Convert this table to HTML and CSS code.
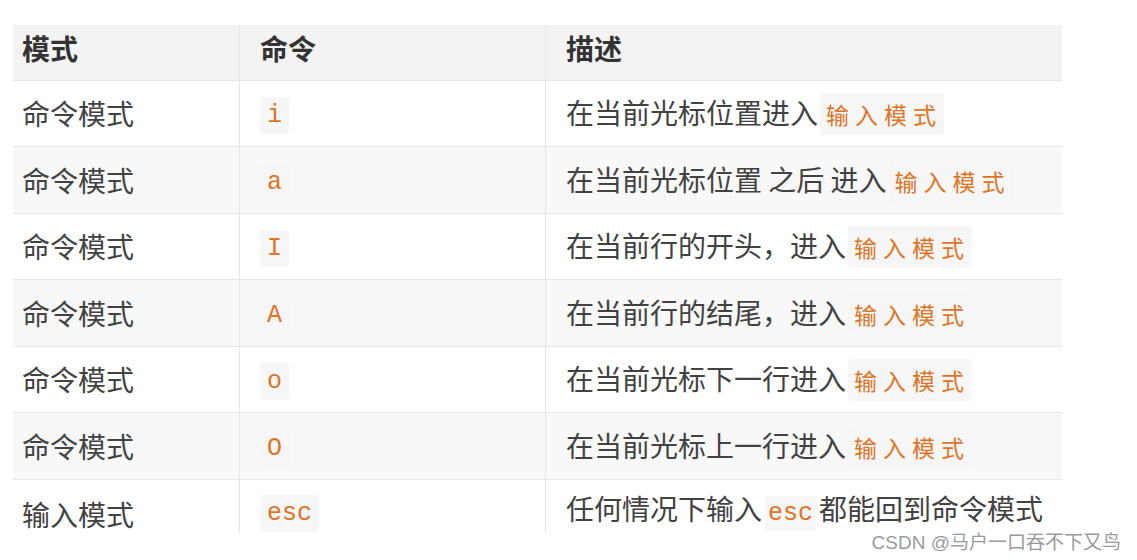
FILE: index.html
```html
<!DOCTYPE html>
<html lang="zh">
<head>
<meta charset="utf-8">
<link rel="stylesheet" href="styles.css">
</head>
<body>
<div class="page">
  <table class="modes">
    <thead>
      <tr><th class="c1">模式</th><th class="c2">命令</th><th class="c3">描述</th></tr>
    </thead>
    <tbody>
      <tr><td class="c1">命令模式</td><td class="c2"><code>i</code></td><td class="c3">在当前光标位置进入<code class="cn">输入模式</code></td></tr>
      <tr><td class="c1">命令模式</td><td class="c2"><code>a</code></td><td class="c3">在当前光标位置 之后 进入<code class="cn">输入模式</code></td></tr>
      <tr><td class="c1">命令模式</td><td class="c2"><code>I</code></td><td class="c3">在当前行的开头，进入<code class="cn">输入模式</code></td></tr>
      <tr><td class="c1">命令模式</td><td class="c2"><code>A</code></td><td class="c3">在当前行的结尾，进入<code class="cn">输入模式</code></td></tr>
      <tr><td class="c1">命令模式</td><td class="c2"><code>o</code></td><td class="c3">在当前光标下一行进入<code class="cn">输入模式</code></td></tr>
      <tr><td class="c1">命令模式</td><td class="c2"><code>O</code></td><td class="c3">在当前光标上一行进入<code class="cn">输入模式</code></td></tr>
      <tr class="last"><td class="c1">输入模式</td><td class="c2"><code>esc</code></td><td class="c3">任何情况下输入<code class="inl">esc</code>都能回到命令模式</td></tr>
    </tbody>
  </table>
  <div class="mark">CSDN @马户一口吞不下又鸟</div>
</div>
</body>
</html>
```
FILE: styles.css
```css
html, body {
  margin: 0;
  padding: 0;
  background: #ffffff;
}
.page {
  position: relative;
  width: 1137px;
  height: 560px;
  overflow: hidden;
  padding: 25px 0 0 13px;
  box-sizing: border-box;
  font-family: "Noto Sans CJK SC", "Noto Sans", sans-serif;
  color: #424242;
}
.modes {
  border-collapse: collapse;
  width: 1049px;
  table-layout: fixed;
}
.modes th, .modes td {
  text-align: left;
  font-size: 28px;
  line-height: 36px;
  padding: 0;
  vertical-align: middle;
  border-left: 1px solid #e6e6e6;
  border-bottom: 1px solid #e6e6e6;
}
.modes th.c1, .modes td.c1 {
  border-left: none;
  width: 217px;
  padding-left: 9px;
}
.modes th.c2, .modes td.c2 {
  width: 285px;
  padding-left: 20px;
}
.modes th.c3, .modes td.c3 {
  padding-left: 20px;
}
.modes thead tr {
  background: #f3f3f3;
  height: 55px;
}
.modes th {
  font-weight: 700;
  color: #333333;
  padding-bottom: 9px;
}
.modes tbody tr {
  height: 66.5px;
}
.modes tbody tr:nth-child(even) {
  background: #f8f8f8;
}
.modes tbody tr.last {
  height: 54px;
}
.modes tbody tr.last td {
  border-bottom: none;
  vertical-align: bottom;
  padding-bottom: 1px;
}
code {
  font-family: "Liberation Mono", "Noto Sans CJK SC", monospace;
  font-size: 25px;
  color: #de7425;
  background: #f6f6f6;
  padding: 4px 7px;
  border-radius: 3px;
}
code.cn {
  font-family: "Noto Sans CJK SC", sans-serif;
  font-size: 23px;
  letter-spacing: 6px;
  padding: 4px 2px 4px 6px;
  margin-left: 2px;
}
code.inl {
  padding: 3px 3px;
  margin: 0 3px;
}
.mark {
  position: absolute;
  right: 16px;
  bottom: 6px;
  font-family: "Liberation Sans", "Noto Sans CJK SC", sans-serif;
  font-size: 19px;
  color: #9a9a9a;
  background: rgba(255,255,255,0.7);
}
```
